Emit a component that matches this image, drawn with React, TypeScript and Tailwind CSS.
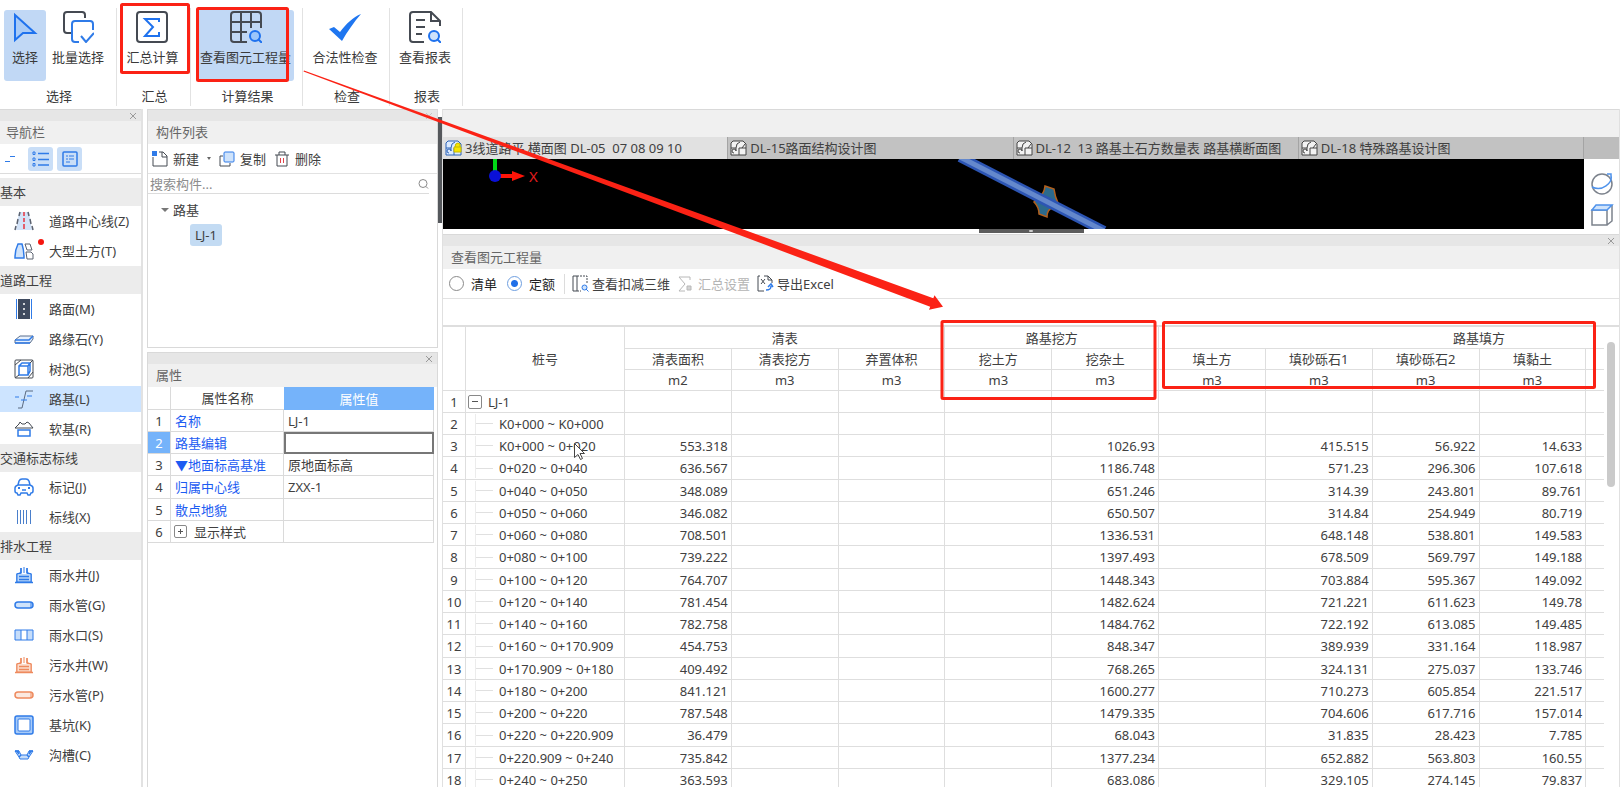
import type { ReactNode } from 'react'
import clsx from 'clsx'

const BLUE = '#2f7be8'
const DARK = '#454a52'

function CloseIcon({ faint }: { faint?: boolean }) {
  return (
    <svg viewBox="0 0 8 8" fill="none" stroke={faint ? '#c4c4c4' : '#9a9a9a'} className="h-2 w-2">
      <path d="M1 1l6 6M7 1l-6 6" />
    </svg>
  )
}

interface RibbonButtonProps {
  label: string
  active?: boolean
  className?: string
  children: ReactNode
}

function RibbonButton({ label, active, className, children }: RibbonButtonProps) {
  return (
    <button
      type="button"
      className={clsx('flex h-[71px] flex-col items-center rounded-[3px] whitespace-nowrap', active && 'bg-[#c1d8f5]', className)}
    >
      <svg viewBox="0 0 32 32" fill="none" strokeWidth={2} className="mt-px h-8 w-8 shrink-0">
        {children}
      </svg>
      <span className="mt-1 leading-5">{label}</span>
    </button>
  )
}

function RibbonGroup({ label, className, children }: { label: string; className: string; children: ReactNode }) {
  return (
    <div className={clsx('flex shrink-0 flex-col border-r border-[#e2e2e2] pt-[2px]', className)}>
      <div className="flex justify-center pr-[2px]">{children}</div>
      <div className="mt-[5px] pl-[2px] text-center leading-5">{label}</div>
    </div>
  )
}

function Ribbon() {
  return (
    <header className="flex h-[109px] shrink-0 items-start bg-white pt-2 text-[#3a3a3a]">
      <RibbonGroup label="选择" className="w-[117px]">
        <RibbonButton label="选择" active className="w-[42px]">
          <path d="M6 4v25l8-7h12z" stroke="#1f72ee" fill="#a9cbf7" />
        </RibbonButton>
        <RibbonButton label="批量选择" className="w-[64px]">
          <path d="M9 22H5a3 3 0 0 1-3-3V4a3 3 0 0 1 3-3h15a3 3 0 0 1 3 3v3" stroke={DARK} />
          <path d="M17 31h-4a3 3 0 0 1-3-3V13a3 3 0 0 1 3-3h15a3 3 0 0 1 3 3v6" stroke={BLUE} />
          <path d="M19 25l5 6 8-9" stroke={BLUE} />
        </RibbonButton>
      </RibbonGroup>
      <RibbonGroup label="汇总" className="w-[74px]">
        <RibbonButton label="汇总计算">
          <rect x="1" y="1" width="30" height="30" rx="3" stroke={DARK} />
          <path d="M23 11V8H9l8 8-8 9h14v-4" stroke="#1f72ee" />
        </RibbonButton>
      </RibbonGroup>
      <RibbonGroup label="计算结果" className="w-[112px]">
        <RibbonButton label="查看图元工程量" active className="w-[97px]">
          <path d="M17 31H4a3 3 0 0 1-3-3V4a3 3 0 0 1 3-3h24a3 3 0 0 1 3 3v13M1 11h30M1 21h16M11 1v30M21 1v16" stroke={DARK} />
          <circle cx="25" cy="25" r="5" stroke="#1f72ee" fill="#9cc6fa" />
          <path d="M28 28l4 4" stroke="#1f72ee" />
        </RibbonButton>
      </RibbonGroup>
      <RibbonGroup label="检查" className="w-[87px]">
        <RibbonButton label="合法性检查">
          <path d="M0 18l5-2 6 5C17 13 24 6 32 3 25 11 18 21 13 30z" fill="#1f76f0" />
        </RibbonButton>
      </RibbonGroup>
      <RibbonGroup label="报表" className="w-[73px]">
        <RibbonButton label="查看报表">
          <path d="M15 31H4a3 3 0 0 1-3-3V4a3 3 0 0 1 3-3h18l9 9v5M22 1v9h9" stroke={DARK} />
          <path d="M7 9h9M7 16h9M7 23h6" stroke={DARK} />
          <circle cx="25" cy="25" r="5" stroke="#1f72ee" fill="#cfe3fb" />
          <path d="M28 28l4 4" stroke="#1f72ee" />
        </RibbonButton>
      </RibbonGroup>
    </header>
  )
}

function PanelHead({ title, faintClose }: { title: string; faintClose?: boolean }) {
  return (
    <div className="shrink-0 border-t border-[#d9d9d9]">
      <div className="flex h-[11px] items-center justify-end bg-[#e6e6e6] pr-1">
        <button type="button" aria-label="关闭">
          <CloseIcon faint={faintClose} />
        </button>
      </div>
      <h2 className="h-[23px] bg-[#f0f0f0] pl-2 leading-[23px] text-[#666]">{title}</h2>
    </div>
  )
}

const well = (stroke: string, fill: string) => (
  <>
    <path d="M3 17V9l4-1V3M17 17V9l-4-1V3" stroke={stroke} strokeWidth={1.5} fill={fill} />
    <path d="M3 9h14v8H3z" fill={fill} />
    <path d="M7 3v5L3 9v8h14V9l-4-1V3M10 2v6" stroke={stroke} />
    <path d="M1 17.500h18M5 11.500h10M5 14.500h10" stroke={stroke} strokeWidth={1.5} />
  </>
)

const pipe = (stroke: string, fill: string) => (
  <>
    <rect x="1" y="7" width="18" height="6" rx="3" stroke={stroke} fill={fill} strokeWidth={1.5} />
    <path d="M17 7.500v5" stroke={stroke} />
  </>
)

interface NavItem {
  label: string
  icon: ReactNode
  active?: boolean
  dot?: boolean
}

const sections: { title: string; items: NavItem[] }[] = [
  {
    title: '基本',
    items: [
      {
        label: '道路中心线(Z)',
        icon: (
          <>
            <path d="M5 1h10l3 18H2z" fill="#d3e3f8" />
            <path d="M6 1L5 5M4 8l-1 5M2 15l-1 4M14 1l1 4M16 8l1 5M18 15l1 4" stroke="#5b6270" strokeWidth={1.5} />
            <path d="M10 1v4M10 7v4M10 13v5" stroke="#e8353f" strokeWidth={1.5} />
          </>
        ),
      },
      {
        label: '大型土方(T)',
        dot: true,
        icon: (
          <>
            <path d="M4 3h4q2 6 2 14H1Q1 9 4 3z" stroke={BLUE} fill="#cfe3fb" strokeWidth={1.5} />
            <path d="M11 3h5l2 6h-5zM12 11h5l2 2v5h-6z" stroke="#5b6270" />
          </>
        ),
      },
    ],
  },
  {
    title: '道路工程',
    items: [
      {
        label: '路面(M)',
        icon: (
          <>
            <path d="M4 0h12v20H4z" fill="#3f4a5e" />
            <path d="M2.500 0v20M17.500 0v20" stroke={BLUE} />
            <path d="M10 4v2M10 9v2M10 14v2" stroke="#fff" strokeWidth={1.5} />
          </>
        ),
      },
      {
        label: '路缘石(Y)',
        icon: (
          <>
            <path d="M1 11l5-4h13v3l-3 4H1z" stroke="#5b6f8e" fill="#e6f0fd" />
            <path d="M1 11h14l4-4M1 14h15" stroke={BLUE} strokeWidth={1.5} />
          </>
        ),
      },
      {
        label: '树池(S)',
        icon: (
          <>
            <rect x="1" y="1" width="18" height="18" rx="1" stroke={DARK} />
            <path d="M5 7h9v9H5zM5 7l3-3h8l-2 3M16 4v8l-2 4" stroke={BLUE} strokeWidth={1.5} />
            <path d="M1 6l6-5M1 19l4-3M14 19l5-6M16 4l3-3" stroke={DARK} />
          </>
        ),
      },
      {
        label: '路基(L)',
        active: true,
        icon: (
          <>
            <path d="M4 19h4l4-17h7" stroke="#5b6a80" />
            <path d="M1 8h4M7 11h6M13 7h5" stroke={BLUE} />
          </>
        ),
      },
      {
        label: '软基(R)',
        icon: (
          <>
            <path d="M1 9h18l-4-5-2-1-2 2H8L6 3 5 5z" stroke={DARK} />
            <path d="M4 11h12v6H4z" stroke={BLUE} strokeWidth={1.5} />
          </>
        ),
      },
    ],
  },
  {
    title: '交通标志标线',
    items: [
      {
        label: '标记(J)',
        icon: (
          <>
            <path
              d="M4 8l1-4q1-2 3-2h4q2 0 3 2l1 4q3 1 3 3v3q0 2-2 2l-1 2h-2l-1-2H7l-1 2H4l-1-2q-2 0-2-2v-3q0-2 3-3zM4 8h12M8 13h4"
              stroke={BLUE}
              strokeWidth={1.5}
            />
            <path d="M4 11h2M14 11h2" stroke={BLUE} strokeWidth={2} />
          </>
        ),
      },
      {
        label: '标线(X)',
        icon: <path d="M3.500 3v14M6.500 3v14M9.500 3v14M12.500 3v14M16.500 3v14" stroke="#4a7fcb" />,
      },
    ],
  },
  {
    title: '排水工程',
    items: [
      { label: '雨水井(J)', icon: well(BLUE, '#b9d6f9') },
      { label: '雨水管(G)', icon: pipe(BLUE, '#cfe3fb') },
      {
        label: '雨水口(S)',
        icon: (
          <>
            <path d="M1 5h6v10H1zM13 5h6v10h-6z" fill="#c6ddfa" />
            <path d="M1 5h18v10H1zM7 5v10M13 5v10" stroke={BLUE} />
          </>
        ),
      },
      { label: '污水井(W)', icon: well('#ee8a5e', '#fbdccd') },
      { label: '污水管(P)', icon: pipe('#ee8a5e', '#fbe9e0') },
      {
        label: '基坑(K)',
        icon: (
          <>
            <rect x="1" y="1" width="18" height="18" rx="2" stroke={BLUE} fill="#a8cbf8" strokeWidth={1.5} />
            <rect x="4" y="4" width="12" height="12" rx="1" stroke={BLUE} fill="#fff" />
          </>
        ),
      },
      {
        label: '沟槽(C)',
        icon: (
          <>
            <path d="M1 6h4l2 4h6l2-4h4l-4 6-1 2H6l-1-2z" stroke={BLUE} fill="#c6ddfa" />
            <path d="M7 10l-2 2M13 10l2 2M3 6l2 3M17 6l-2 3M1 6h4M15 6h4" stroke={BLUE} strokeWidth={1.5} />
          </>
        ),
      },
    ],
  },
]

function NavPanel() {
  return (
    <nav className="mr-1 flex w-[143px] shrink-0 flex-col border-r-2 border-[#e2e2e2] bg-white">
      <div className="-ml-[2px]">
        <PanelHead title="导航栏" />
      </div>
      <div className="flex h-[30px] shrink-0 items-center gap-1 border-b border-[#dcdcdc] pl-1">
        <button type="button" aria-label="折叠" className="flex h-6 w-5 items-center">
          <svg viewBox="0 0 12 12" fill="none" stroke={BLUE} className="h-3 w-3">
            <path d="M6 3.500h5M1 8.500h5" />
          </svg>
        </button>
        <button type="button" aria-label="列表" className="flex h-6 w-[25px] items-center justify-center rounded-[3px] bg-[#c9def7]">
          <svg viewBox="0 0 18 16" fill="none" stroke={BLUE} className="h-4 w-[18px]">
            <path d="M6 2.500h11M6 8.500h11M6 14h11" strokeWidth={1.5} />
            <path d="M1 1h2v2.500H1zM1 7h2v2.500H1zM1 12.500h2V15H1z" />
          </svg>
        </button>
        <button type="button" aria-label="分组" className="flex h-6 w-[25px] items-center justify-center rounded-[3px] bg-[#c9def7]">
          <svg viewBox="0 0 16 16" fill="none" stroke={BLUE} className="h-4 w-4">
            <rect x="1" y="1" width="14" height="14" rx="1" strokeWidth={1.5} />
            <path d="M4 5h2M7 5h5M4 8h2M7 8h5M4 11h4" />
          </svg>
        </button>
      </div>
      <div className="mt-1 flex flex-col">
        {sections.map((section) => (
          <section key={section.title}>
            <h3 className="h-7 bg-[#ececec] leading-7">{section.title}</h3>
            {section.items.map((item) => (
              <button
                key={item.label}
                type="button"
                className={clsx('flex h-[30px] w-full items-center gap-[15px] border-y-2 border-white pl-[14px] whitespace-nowrap', item.active && 'bg-[#cde4ff]')}
              >
                <span className="relative">
                  <svg viewBox="0 0 20 20" fill="none" className="h-5 w-5">
                    {item.icon}
                  </svg>
                  {item.dot && <span className="absolute -top-[2px] -right-[10px] h-[6px] w-[6px] rounded-full bg-[#f5160f]" />}
                </span>
                {item.label}
              </button>
            ))}
          </section>
        ))}
      </div>
    </nav>
  )
}

function ComponentList() {
  return (
    <section className="flex h-[239px] shrink-0 flex-col border-x border-b border-[#d9d9d9]">
      <PanelHead title="构件列表" faintClose />
      <div className="flex h-[30px] shrink-0 items-center border-b border-[#e2e2e2] pl-1">
        <button type="button" className="flex items-center gap-[5px]">
          <svg viewBox="0 0 16 16" fill="none" className="h-4 w-4">
            <path d="M1 6v9h14V5l-4-4H7M10 1v5h5" stroke={DARK} />
            <path d="M0 0h5v5H0z" fill={BLUE} />
          </svg>
          新建
        </button>
        <button type="button" aria-label="更多新建" className="ml-2 border-x-2 border-t-3 border-x-transparent border-t-[#666]" />
        <button type="button" className="ml-2 flex items-center gap-[5px]">
          <svg viewBox="0 0 16 16" fill="none" className="h-4 w-4">
            <path d="M4 5H1v10h10v-3" stroke={DARK} />
            <rect x="5" y="1" width="10" height="10" rx="1" stroke={BLUE} fill="#cfe3fb" />
          </svg>
          复制
        </button>
        <button type="button" className="ml-2 flex items-center gap-[5px]">
          <svg viewBox="0 0 16 16" fill="none" className="h-4 w-4">
            <path d="M1 4h14M5 4V1h6v3M3 4v11h10V4" stroke={DARK} />
            <path d="M6.500 7v5M9.500 7v5" stroke="#e0444c" />
          </svg>
          删除
        </button>
      </div>
      <label className="mr-2 flex h-5 shrink-0 items-center border-b border-[#dcdcdc] pl-[2px]">
        <input aria-label="搜索构件" placeholder="搜索构件..." className="min-w-0 flex-1 outline-none placeholder:text-[#8c8c8c]" />
        <svg viewBox="0 0 12 12" fill="none" stroke="#8a8a8a" className="h-3 w-3">
          <circle cx="6" cy="5.500" r="4" />
          <path d="M9 8.500l2 2" />
        </svg>
      </label>
      <div className="pt-[6px] pl-[13px]">
        <div className="flex items-center gap-1 leading-5">
          <span className="border-x-4 border-t-4 border-x-transparent border-t-[#777]" />
          路基
        </div>
        <button type="button" className="mt-1 ml-[29px] h-[22px] w-8 rounded-[3px] bg-[#c3dbf3]">
          LJ-1
        </button>
      </div>
    </section>
  )
}

const properties = [
  { name: '名称', value: 'LJ-1' },
  { name: '路基编辑', value: '', editing: true },
  { name: '▼地面标高基准', value: '原地面标高' },
  { name: '归属中心线', value: 'ZXX-1' },
  { name: '散点地貌', value: '' },
  { name: '显示样式', value: '', expandable: true },
]

function PropertyPanel() {
  return (
    <section className="mt-1 flex flex-1 flex-col border-x border-[#d9d9d9]">
      <PanelHead title="属性" />
      <div className="pr-[3px]">
        <table className="w-full table-fixed border-separate border-spacing-0">
          <colgroup>
            <col className="w-[23px]" />
            <col className="w-[113px]" />
            <col />
          </colgroup>
          <thead>
            <tr className="h-[23px]">
              <th className="border-r border-b border-[#dadada]" />
              <th className="border-b border-[#dadada] font-normal">属性名称</th>
              <th className="bg-[#75b3fa] font-normal text-white">属性值</th>
            </tr>
          </thead>
          <tbody>
            {properties.map((row, i) => (
              <tr key={row.name} className="h-[22px] leading-5 [&:nth-child(4n)]:h-[23px]">
                <td className={clsx('border-r border-b border-[#dadada] p-0 text-center', row.editing && 'bg-[#75b3fa] text-white')}>
                  {i + 1}
                </td>
                <td className={clsx('border-r border-b border-[#dadada] p-0 pl-1', !row.expandable && 'text-[#1c5cf2]')}>
                  {row.expandable ? (
                    <span className="flex items-center gap-[7px]">
                      <button type="button" aria-label="展开" className="-ml-px flex h-[13px] w-[13px] items-center justify-center rounded-[2px] border border-[#888]">
                        <svg viewBox="0 0 7 7" stroke="#555" className="h-[7px] w-[7px]">
                          <path d="M1 3.500h5M3.500 1v5" />
                        </svg>
                      </button>
                      {row.name}
                    </span>
                  ) : (
                    row.name
                  )}
                </td>
                {row.editing ? (
                  <td className="p-0">
                    <input aria-label={row.name} className="block h-[22px] w-full border-2 border-[#777] px-[2px] outline-none" />
                  </td>
                ) : (
                  <td className="border-r border-b border-[#dadada] p-0 pl-1">{row.value}</td>
                )}
              </tr>
            ))}
          </tbody>
        </table>
      </div>
    </section>
  )
}

const drawings = [
  '3线道路平 横面图 DL-05  07 08 09 10',
  'DL-15路面结构设计图',
  'DL-12  13 路基土石方数量表 路基横断面图',
  'DL-18 特殊路基设计图',
]

function DrawingTabs() {
  return (
    <div className="flex h-[22px] shrink-0 bg-[#bdbdbd] pr-[35px]">
      {drawings.map((name, i) => (
        <button
          key={name}
          type="button"
          className={clsx(
            'flex min-w-0 flex-1 items-center gap-[3px] overflow-hidden border-r border-[#a4a4a4] pl-[2px] whitespace-pre',
            i === 0 ? 'bg-[#e1e1e1]' : 'bg-[#c2c2c2]',
          )}
        >
          <svg viewBox="0 0 17 16" fill="none" stroke={i === 0 ? '#2a62b8' : '#444'} className="h-4 w-[17px] shrink-0">
            <path d="M3 1h10l3 3v11H1V3z" fill={i === 0 ? '#dcebff' : '#f2f2f2'} />
            <path d="M1 8h5M4 13a2 2 0 1 1 2-2V8q0-5 4-6M9 8h7M9 8v7M12 8l3-4" />
            {i === 0 && <path d="M9 7h7v5H9zM10 7q0-4 3-4t2 4" fill="#f6e600" stroke="#c6b800" />}
          </svg>
          {name}
        </button>
      ))}
    </div>
  )
}

function Viewport() {
  return (
    <div className="flex h-[70px] shrink-0">
      <svg className="h-full flex-1 bg-black" fill="none">
        <path d="M52 0v12" stroke="#00d816" strokeWidth={4} />
        <path d="M57 17h14" stroke="#ff1408" strokeWidth={4} />
        <path d="M69 12l13 5-13 5z" fill="#ff1408" />
        <circle cx="52" cy="17" r="6" fill="#0a10d8" />
        <text x="86" y="23" fontSize="15" fill="#e01c1c">X</text>
        <path d="M602 27l9 3q1 8 4 14l-5 5q-6 1-6 9l-8-3q0-7-5-12l5-5q5-3 6-11z" fill="#2c6a8c" stroke="#b4601c" strokeWidth={1.5} />
        <path d="M517-2L661 72" stroke="#2c55b4" strokeWidth={10} />
        <path d="M517-2L661 72" stroke="#6488cc" strokeWidth={5} />
      </svg>
      <div className="flex w-[35px] shrink-0 flex-col items-center gap-[7px] bg-white pt-[13px]">
        <button type="button" aria-label="旋转视图">
          <svg viewBox="0 0 24 24" fill="none" strokeWidth={1.5} className="h-6 w-6">
            <circle cx="12" cy="12" r="10" stroke="#7c828c" />
            <path d="M17 2h4v5M21 3c2 8-9 17-19 12" stroke="#4f93ec" />
          </svg>
        </button>
        <button type="button" aria-label="立方体视图">
          <svg viewBox="0 0 24 24" fill="none" strokeWidth={1.5} className="h-6 w-6">
            <path d="M2 7h15v15H2zM17 22l5-4V2" stroke="#7c828c" />
            <path d="M2 7l4-5h16l-5 5z" stroke="#4f93ec" fill="#cfe3fb" />
          </svg>
        </button>
      </div>
    </div>
  )
}

const rows = [
  ['K0+000 ~ K0+000', '', '', '', '', ''],
  ['K0+000 ~ 0+020', '553.318', '1026.93', '415.515', '56.922', '14.633'],
  ['0+020 ~ 0+040', '636.567', '1186.748', '571.23', '296.306', '107.618'],
  ['0+040 ~ 0+050', '348.089', '651.246', '314.39', '243.801', '89.761'],
  ['0+050 ~ 0+060', '346.082', '650.507', '314.84', '254.949', '80.719'],
  ['0+060 ~ 0+080', '708.501', '1336.531', '648.148', '538.801', '149.583'],
  ['0+080 ~ 0+100', '739.222', '1397.493', '678.509', '569.797', '149.188'],
  ['0+100 ~ 0+120', '764.707', '1448.343', '703.884', '595.367', '149.092'],
  ['0+120 ~ 0+140', '781.454', '1482.624', '721.221', '611.623', '149.78'],
  ['0+140 ~ 0+160', '782.758', '1484.762', '722.192', '613.085', '149.485'],
  ['0+160 ~ 0+170.909', '454.753', '848.347', '389.939', '331.164', '118.987'],
  ['0+170.909 ~ 0+180', '409.492', '768.265', '324.131', '275.037', '133.746'],
  ['0+180 ~ 0+200', '841.121', '1600.277', '710.273', '605.854', '221.517'],
  ['0+200 ~ 0+220', '787.548', '1479.335', '704.606', '617.716', '157.014'],
  ['0+220 ~ 0+220.909', '36.479', '68.043', '31.835', '28.423', '7.785'],
  ['0+220.909 ~ 0+240', '735.842', '1377.234', '652.882', '563.803', '160.55'],
  ['0+240 ~ 0+250', '363.593', '683.086', '329.105', '274.145', '79.837'],
]

const columns = ['清表面积', '清表挖方', '弃置体积', '挖土方', '挖杂土', '填土方', '填砂砾石1', '填砂砾石2', '填黏土', '', '']
const units = ['m2', 'm3', 'm3', 'm3', 'm3', 'm3', 'm3', 'm3', 'm3', '', '']
const cell = 'border-r border-b border-[#dedede] p-0'

function QuantityTable() {
  return (
    <div className="flex min-h-0 flex-1 border-t-2 border-[#dedede]">
      <div className="min-w-0 flex-1 overflow-hidden">
        {/* the last two fill columns run past the right edge */}
        <table className="w-[calc(100%+196px)] table-fixed border-separate border-spacing-0">
          <colgroup>
            <col className="w-[23px]" />
            <col className="w-[159px]" />
            {columns.map((_, i) => (
              <col key={i} />
            ))}
          </colgroup>
          <thead className="leading-5 [&_th]:font-normal">
            <tr className="h-[22px]">
              <th rowSpan={3} className={cell} />
              <th rowSpan={3} className={cell}>桩号</th>
              <th colSpan={3} className={cell}>清表</th>
              <th colSpan={2} className={cell}>路基挖方</th>
              <th colSpan={6} className={cell}>路基填方</th>
            </tr>
            <tr className="h-[21px]">
              {columns.map((name, i) => (
                <th key={i} className={cell}>{name}</th>
              ))}
            </tr>
            <tr className="h-[21px]">
              {units.map((unit, i) => (
                <th key={i} className={cell}>{unit}</th>
              ))}
            </tr>
          </thead>
          <tbody className="leading-5">
            <tr className="h-[22px]">
              <td className={clsx(cell, 'text-center')}>1</td>
              <td className={cell}>
                <span className="flex items-center gap-[6px] pl-[2px]">
                  <button type="button" aria-label="收起" className="flex h-[14px] w-[14px] items-center justify-center rounded-[2px] border border-[#888]">
                    <svg viewBox="0 0 6 6" stroke="#555" className="h-[6px] w-[6px]">
                      <path d="M0 2.500h6" />
                    </svg>
                  </button>
                  LJ-1
                </span>
              </td>
              {columns.map((_, i) => (
                <td key={i} className={cell} />
              ))}
            </tr>
            {rows.map(([station, area, soil, fill1, fill2, clay], i) => (
              <tr key={station} className="h-[22px] [&:nth-child(4n)]:h-[23px]">
                <td className={clsx(cell, 'text-center')}>{i + 2}</td>
                <td className={cell}>
                  <span className="ml-[9px] flex items-center gap-[6px] border-l border-[#ececec] whitespace-nowrap">
                    <span className="w-[17px] border-t border-[#e0e0e0]" />
                    {station}
                  </span>
                </td>
                {[area, '', '', '', soil, '', fill1, fill2, clay, '', ''].map((value, j) => (
                  <td key={j} className={clsx(cell, 'pr-[3px] text-right')}>{value}</td>
                ))}
              </tr>
            ))}
          </tbody>
        </table>
      </div>
      <div className="w-[15px] shrink-0 pt-[15px] pl-[3px]">
        <div className="h-[145px] w-2 rounded-full bg-[#cacaca]" />
      </div>
    </div>
  )
}

function RadioOption({ label, checked }: { label: string; checked?: boolean }) {
  return (
    <label className="flex items-center gap-[7px]">
      <input
        type="radio"
        name="mode"
        defaultChecked={checked}
        className="h-[15px] w-[15px] appearance-none rounded-full border border-[#8a8a8a] bg-white checked:border-[#6f9fe0] checked:bg-[radial-gradient(circle,#1f6fe8_3px,white_4px)]"
      />
      {label}
    </label>
  )
}

function QuantityPanel() {
  return (
    <section className="flex min-h-0 flex-1 flex-col">
      <PanelHead title="查看图元工程量" />
      <div className="flex h-[30px] shrink-0 items-center border-b border-[#e2e2e2] pl-[6px]">
        <div className="flex gap-[10px] text-[#222]">
          <RadioOption label="清单" />
          <RadioOption label="定额" checked />
        </div>
        <span className="ml-[9px] h-5 border-l border-[#dcdcdc]" />
        <button type="button" className="ml-[7px] flex items-center gap-[3px]">
          <svg viewBox="0 0 17 17" fill="none" className="h-[17px] w-[17px]">
            <path d="M5 1H1v15h4z" stroke={DARK} />
            <path d="M5 1h10v7M5 16h4" stroke={DARK} strokeDasharray="2 1" />
            <circle cx="12.500" cy="12.500" r="2.500" stroke={BLUE} fill="#cfe3fb" />
            <path d="M14 14l2.500 2.500" stroke={BLUE} />
          </svg>
          查看扣减三维
        </button>
        <button type="button" disabled className="ml-[7px] flex items-center gap-[5px] text-[#b4b4b4]">
          <svg viewBox="0 0 16 16" fill="none" stroke="#b8b8b8" className="h-4 w-4">
            <path d="M13 4V1H2l6 7-6 7h6" />
            <path d="M10 10h4v4h-4z" fill="#d4d4d4" />
          </svg>
          汇总设置
        </button>
        <button type="button" className="ml-[7px] flex items-center gap-[3px]">
          <svg viewBox="0 0 17 17" fill="none" className="h-[17px] w-[17px]">
            <path d="M7 16H1V1h2M7 1h4l4 4v3M11 1v4h4" stroke={DARK} />
            <path d="M4 4l4 5M8 4L4 9" stroke={DARK} />
            <path d="M9 15c4 0 5-1 5-4M11 12l3-3 2 3" stroke={BLUE} strokeWidth={1.5} />
          </svg>
          导出Excel
        </button>
      </div>
      <div className="h-[26px] shrink-0" />
      <QuantityTable />
    </section>
  )
}

function Annotations() {
  return (
    <svg className="pointer-events-none absolute inset-0 h-full w-full" fill="none">
      <g stroke="#fb2215" strokeWidth={3}>
        <rect x="121.500" y="4.500" width="67" height="68" rx="1" />
        <rect x="197.500" y="8.500" width="90" height="72" rx="1" />
        <rect x="942" y="321.500" width="213" height="77" rx="1" />
        <rect x="1163.500" y="322.500" width="431" height="65" rx="1" />
      </g>
      <path d="M304 70.500L933.300 298.300 934.500 295.300 943 306.700 929 309.700 930.200 306.700 303.500 71.500z" fill="#fb2215" />
      <path d="M574.500 443.500v14l3.500-3 2.500 5 2-1-2.500-5h4.500z" fill="#fff" stroke="#444" />
    </svg>
  )
}

export default function App() {
  return (
    <div className="relative flex h-screen flex-col overflow-hidden bg-white font-['Noto_Sans','Noto_Sans_CJK_SC',sans-serif] text-[13px] leading-5 text-[#404040]">
      <Ribbon />
      <main className="flex min-h-0 flex-1">
        <NavPanel />
        <div className="flex w-[291px] shrink-0 flex-col">
          <ComponentList />
          <PropertyPanel />
        </div>
        <div className="w-1 shrink-0 pt-2">
          <div className="h-[106px] bg-[#55585c]" />
        </div>
        <div className="flex min-w-0 flex-1 flex-col border-r border-l border-[#e0e0e0]">
          <div className="h-7 shrink-0 border-t border-[#d9d9d9] bg-[#f0f0f0]" />
          <DrawingTabs />
          <Viewport />
          <div className="h-[5px] shrink-0">
            <button type="button" aria-label="调整大小" className="mx-auto flex h-1 w-[105px] items-center justify-center bg-[#5c5c5c]">
              <span className="h-[2px] w-1 rounded-full bg-[#ccc]" />
            </button>
          </div>
          <QuantityPanel />
        </div>
      </main>
      <Annotations />
    </div>
  )
}
